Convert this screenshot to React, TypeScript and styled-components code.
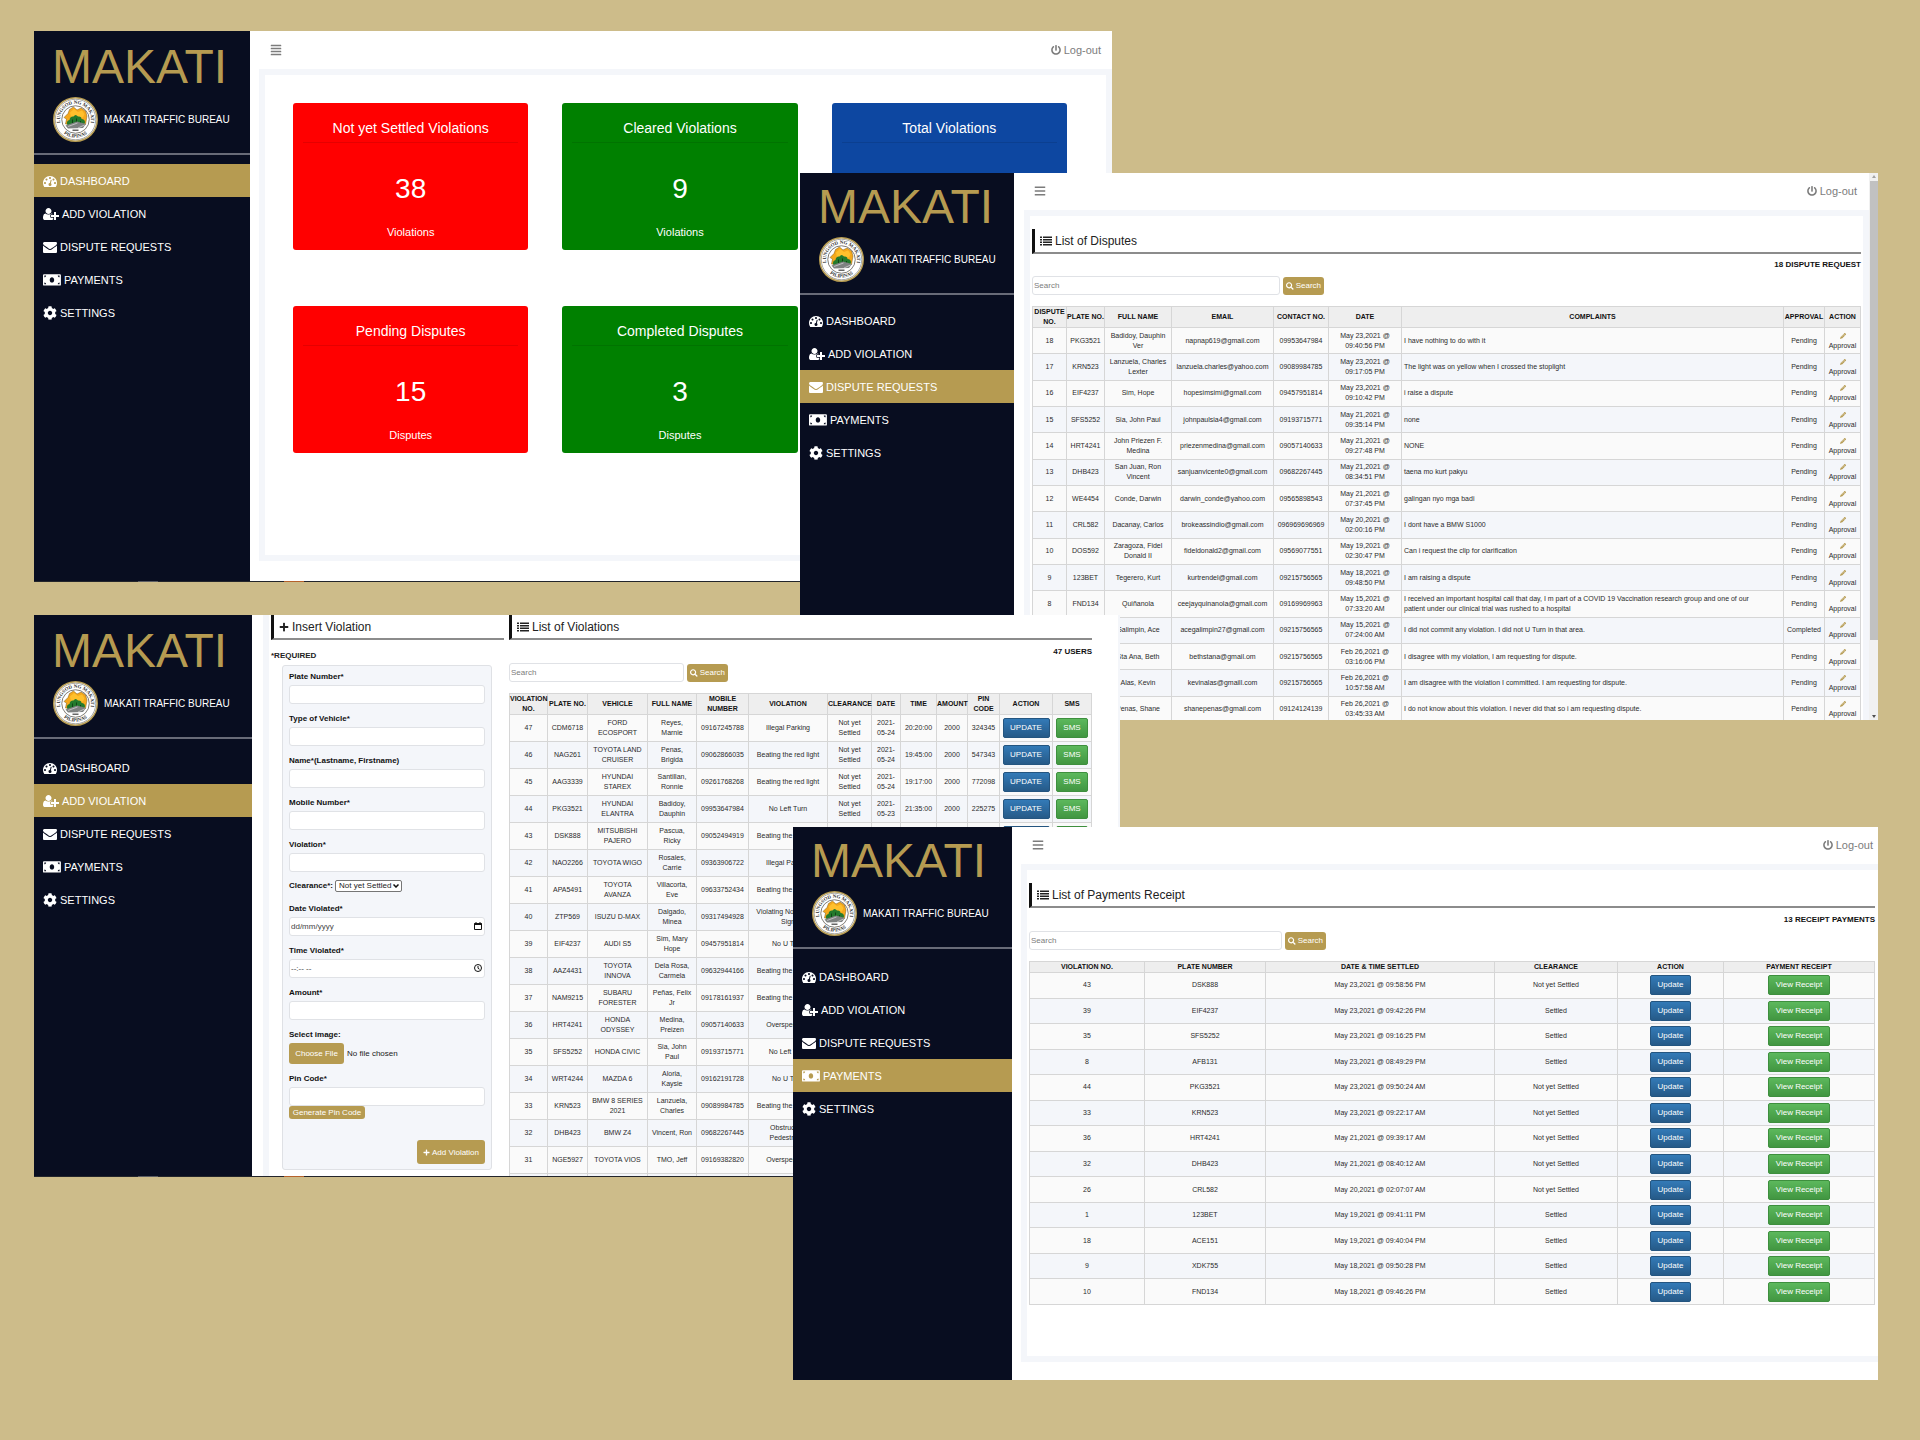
import React, { useId } from "react";
import styled, { createGlobalStyle, css } from "styled-components";
import {
  FaAlignJustify,
  FaBars,
  FaCog,
  FaPencilAlt,
  FaPlus,
  FaPowerOff,
  FaSearch,
} from "react-icons/fa";

const color = {
  desk: "#cdbc8a",
  navy: "#080d20",
  gold: "#b69b51",
  frame: "#f4f6fa",
  line: "#d6d6d6",
  muted: "#7c7c7c",
};

const GlobalStyle = createGlobalStyle`
  *, *::before, *::after { box-sizing: border-box; }
  body { margin: 0; background: ${color.desk}; }
  body, button, input, select {
    font-family: "Liberation Sans", Arial, Helvetica, sans-serif;
  }
  a { color: inherit; text-decoration: none; }
`;

/* ---------- desktop and windows ---------- */

const Desk = styled.main`
  position: relative;
  min-height: 100vh;
  overflow: hidden;
  background: ${color.desk};
`;

const Window = styled.section<{ $x: number; $y: number; $w: number; $h: number }>`
  position: absolute;
  left: ${(p) => p.$x}px;
  top: ${(p) => p.$y}px;
  width: ${(p) => p.$w}px;
  height: ${(p) => p.$h}px;
  display: flex;
  flex-direction: column;
  overflow: hidden;
  background: #fff;
`;

const WindowBody = styled.div`
  flex: 1;
  min-height: 0;
  display: flex;
`;

const TaskbarEdge = styled.div`
  height: 1px;
  flex: none;
  background: linear-gradient(
    90deg,
    #23252b 104px,
    #5a5c62 104px 124px,
    #23252b 124px 250px,
    #b5622c 250px 270px,
    #23252b 270px
  );
`;

const Main = styled.div`
  flex: 1;
  min-width: 0;
  display: flex;
  flex-direction: column;
`;

const TopBar = styled.header<{ $h: number; $right: number }>`
  flex: none;
  height: ${(p) => p.$h}px;
  display: flex;
  align-items: center;
  justify-content: space-between;
  padding: 0 ${(p) => p.$right}px 1px 20px;
  color: ${color.muted};
`;

const MenuButton = styled.button`
  display: flex;
  padding: 0;
  border: 0;
  background: none;
  color: inherit;
  font-size: 12px;
`;

const LogOut = styled.a`
  display: flex;
  align-items: center;
  gap: 3px;
  font-size: 11px;
  line-height: 16px;
`;

const Frame = styled.div<{ $edges: string; $gap: number; $bottom?: number; $pad: string }>`
  flex: 1;
  min-height: 0;
  overflow: hidden;
  margin: 0 0 ${(p) => p.$bottom ?? 0}px ${(p) => p.$gap}px;
  border: solid ${color.frame};
  border-width: ${(p) => p.$edges};
  padding: ${(p) => p.$pad};
`;

/* ---------- sidebar ---------- */

const SidebarBox = styled.aside<{ $w: number; $top: number }>`
  flex: none;
  width: ${(p) => p.$w}px;
  padding-top: ${(p) => p.$top}px;
  background: ${color.navy};
  color: #fff;
`;

const Brand = styled.div`
  padding-left: 18px;
  font-size: 48px;
  line-height: 48px;
  color: ${color.gold};
`;

const Bureau = styled.div`
  display: flex;
  align-items: center;
  gap: 6px;
  margin: 6px 0 11px;
  padding-left: 19px;
  font-size: 10px;
  white-space: nowrap;
`;

const Rule = styled.hr`
  height: 2px;
  margin: 0;
  border: 0;
  background: #686b78;
`;

const Nav = styled.nav<{ $gap: number }>`
  display: flex;
  flex-direction: column;
  padding-top: ${(p) => p.$gap}px;
`;

const NavLink = styled.a<{ $active: boolean }>`
  display: flex;
  align-items: center;
  gap: 3px;
  height: 33px;
  padding-left: 9px;
  font-size: 11px;
  background: ${(p) => (p.$active ? color.gold : "transparent")};

  svg {
    flex: none;
    height: 14px;
    width: auto;
  }
`;

const TachometerIcon = () => (
  <svg viewBox="0 0 1792 1792" fill="currentColor" aria-hidden="true">
    <path d="M384 1152q0-53-37.5-90.5t-90.5-37.5-90.5 37.5-37.5 90.5 37.5 90.5 90.5 37.5 90.5-37.5 37.5-90.5zm192-448q0-53-37.5-90.5t-90.5-37.5-90.5 37.5-37.5 90.5 37.5 90.5 90.5 37.5 90.5-37.5 37.5-90.5zm428 481l101-382q6-26-7.5-48.5t-38.5-29.5-48 6.5-30 39.5l-101 382q-60 5-107 43.5t-63 98.5q-20 77 20 146t117 89 146-20 89-117q16-60-6-117t-72-91zm660-33q0-53-37.5-90.5t-90.5-37.5-90.5 37.5-37.5 90.5 37.5 90.5 90.5 37.5 90.5-37.5 37.5-90.5zm-640-640q0-53-37.5-90.5t-90.5-37.5-90.5 37.5-37.5 90.5 37.5 90.5 90.5 37.5 90.5-37.5 37.5-90.5zm448 192q0-53-37.5-90.5t-90.5-37.5-90.5 37.5-37.5 90.5 37.5 90.5 90.5 37.5 90.5-37.5 37.5-90.5zm320 448q0 261-141 483-19 29-54 29h-1402q-35 0-54-29-141-221-141-483 0-182 71-348t191-286 286-191 348-71 348 71 286 191 191 286 71 348z" />
  </svg>
);

const UserPlusIcon = () => (
  <svg viewBox="0 0 2048 1792" fill="currentColor" aria-hidden="true">
    <path d="M704 896q-159 0-271.5-112.5t-112.5-271.5 112.5-271.5 271.5-112.5 271.5 112.5 112.5 271.5-112.5 271.5-271.5 112.5zm960 128h352q13 0 22.5 9.5t9.5 22.5v192q0 13-9.5 22.5t-22.5 9.5h-352v352q0 13-9.5 22.5t-22.5 9.5h-192q-13 0-22.5-9.5t-9.5-22.5v-352h-352q-13 0-22.5-9.5t-9.5-22.5v-192q0-13 9.5-22.5t22.5-9.5h352v-352q0-13 9.5-22.5t22.5-9.5h192q13 0 22.5 9.5t9.5 22.5v352zm-736 224q0 52 38 90t90 38h256v238q-68 50-171 50h-874q-121 0-194-69t-73-190q0-53 3.5-103.5t14-109 26.5-108.5 43-97.5 62-81 85.5-53.5 111.5-20q19 0 39 17 79 61 154.5 91.5t164.5 30.5 164.5-30.5 154.5-91.5q20-17 39-17 132 0 217 96h-223q-52 0-90 38t-38 90v192z" />
  </svg>
);

const EnvelopeIcon = () => (
  <svg viewBox="0 0 1792 1792" fill="currentColor" aria-hidden="true">
    <path d="M1792 710v794q0 66-47 113t-113 47h-1472q-66 0-113-47t-47-113v-794q44 49 101 87 362 246 497 345 57 42 92.5 65.5t94.5 48 110 24.5h2q51 0 110-24.5t94.5-48 92.5-65.5q170-123 498-345 57-39 100-87zm0-294q0 79-49 151t-122 123q-376 261-468 325-10 7-42.5 31t-54 38.5-52 32.5-57.5 27-50 9h-2q-23 0-50-9t-57.5-27-52-32.5-54-38.5-42.5-31q-91-64-262-182.5t-205-142.5q-62-42-117-115.5t-55-136.5q0-78 41.5-130t118.5-52h1472q65 0 112.5 47t47.5 113z" />
  </svg>
);

const MoneyIcon = () => (
  <svg viewBox="0 0 640 500" fill="currentColor" aria-hidden="true">
    <path d="M608 44H32C14.330 44 0 58.330 0 76v340c0 17.670 14.330 32 32 32h576c17.670 0 32-14.330 32-32V76c0-17.670-14.330-32-32-32zM48 400v-64c35.350 0 64 28.650 64 64H48zm0-244v-64h64c0 35.350-28.650 64-64 64zm272 186c-44.190 0-80-42.980-80-96 0-53.020 35.820-96 80-96s80 42.980 80 96c0 53.030-35.830 96-80 96zm272 58h-64c0-35.350 28.650-64 64-64v64zm0-244c-35.350 0-64-28.650-64-64h64v64z" />
  </svg>
);

const ListIcon = () => (
  <svg width="12" height="10" viewBox="0 0 24 20" fill="currentColor" aria-hidden="true">
    {[1, 6, 11, 16].map((y) => (
      <g key={y}>
        <rect x="0" y={y} width="4" height="3" />
        <rect x="6" y={y} width="18" height="3" />
      </g>
    ))}
  </svg>
);

const Seal = () => {
  const id = useId();
  return (
    <svg width="45" height="45" viewBox="0 0 90 90" role="img" aria-label="Seal of Makati">
      <circle cx="45" cy="45" r="43.5" fill="#fff" stroke="#b69b51" strokeWidth="3" />
      <circle cx="45" cy="45" r="40.5" fill="none" stroke="#55524a" strokeWidth="1" />
      <circle cx="45" cy="45" r="27.5" fill="#fff" stroke="#55524a" strokeWidth="1.5" />
      <path id={`${id}t`} d="M18 60 A31 31 0 1 1 72 60" fill="none" />
      <path id={`${id}b`} d="M13 63 A37 37 0 0 0 77 63" fill="none" />
      <g fontFamily="'Liberation Serif', serif" fontWeight="bold" fontSize="10" fill="#333" textAnchor="middle">
        <text>
          <textPath href={`#${id}t`} startOffset="50%">
            LUNGSOD NG MAKATI
          </textPath>
        </text>
        <text>
          <textPath href={`#${id}b`} startOffset="50%">
            PILIPINAS
          </textPath>
        </text>
      </g>
      <path
        d="M22 41 L30 33 L33 25 L41 20 L48 26 L56 22 L65 28 L68 38 L65 55 L53 57 L25 54 L27 44 Z"
        fill="#f5a81c"
        stroke="#7b5a18"
        strokeWidth="1"
      />
      <path d="M34 31 L42 24 L50 30 L58 27 L63 34 L60 41 L36 41 Z" fill="#ffc02c" />
      <path
        d="M28 54 q-1 -7 5 -8 q1 -8 8 -7 q4 -6 9 0 q7 -1 7 5 q7 0 7 7 l-3 6 h-31 z"
        fill="#237a2c"
      />
      <path d="M39 45 v9 M47 43 v9 M55 48 v6" stroke="#0f4517" strokeWidth="2" />
      <path d="M25 57 L48 49 L66 54 L60 62 L30 63 Z" fill="#7e8181" />
      <path d="M30 59 L49 52 M50 62 L63 56" stroke="#fff" strokeWidth="1" />
      <rect x="39" y="65" width="12" height="3" fill="#666" />
    </svg>
  );
};

type Page = "DASHBOARD" | "ADD VIOLATION" | "DISPUTE REQUESTS" | "PAYMENTS" | "SETTINGS";

const pages: { name: Page; icon: React.ReactNode }[] = [
  { name: "DASHBOARD", icon: <TachometerIcon /> },
  { name: "ADD VIOLATION", icon: <UserPlusIcon /> },
  { name: "DISPUTE REQUESTS", icon: <EnvelopeIcon /> },
  { name: "PAYMENTS", icon: <MoneyIcon /> },
  { name: "SETTINGS", icon: <FaCog /> },
];

const Sidebar = (p: { active: Page; width: number; top: number; navGap: number }) => (
  <SidebarBox $w={p.width} $top={p.top}>
    <Brand>MAKATI</Brand>
    <Bureau>
      <Seal />
      MAKATI TRAFFIC BUREAU
    </Bureau>
    <Rule />
    <Nav $gap={p.navGap}>
      {pages.map(({ name, icon }) => (
        <NavLink key={name} href="#" $active={name === p.active}>
          {icon}
          {name}
        </NavLink>
      ))}
    </Nav>
  </SidebarBox>
);

const Header = (p: { height: number; right: number; icon?: React.ReactNode }) => (
  <TopBar $h={p.height} $right={p.right}>
    <MenuButton type="button" aria-label="Toggle menu">
      {p.icon ?? <FaBars />}
    </MenuButton>
    <LogOut href="#">
      <FaPowerOff size={10} />
      Log-out
    </LogOut>
  </TopBar>
);

/* ---------- dashboard ---------- */

const CardGrid = styled.div`
  display: grid;
  grid-template-columns: repeat(3, 1fr);
  gap: 56px 34px;
`;

const Card = styled.article<{ $bg: string }>`
  min-height: 147px;
  padding: 14px 10px 0;
  border-radius: 3px;
  background: ${(p) => p.$bg};
  color: #fff;
  text-align: center;
`;

const CardTitle = styled.h2`
  margin: 0;
  padding-bottom: 3px;
  border-bottom: 1px solid rgba(0, 0, 0, 0.1);
  font-size: 14px;
  font-weight: 400;
  line-height: 22px;
`;

const CardValue = styled.p`
  margin: 30px 0 19px;
  font-size: 28px;
  line-height: 32px;
`;

const CardUnit = styled.p`
  margin: 0;
  font-size: 11px;
  line-height: 16px;
`;

const cards = [
  { title: "Not yet Settled Violations", value: "38", unit: "Violations", bg: "#ff0000" },
  { title: "Cleared Violations", value: "9", unit: "Violations", bg: "#008000" },
  { title: "Total Violations", value: "", unit: "", bg: "#0d47a1" },
  { title: "Pending Disputes", value: "15", unit: "Disputes", bg: "#ff0000" },
  { title: "Completed Disputes", value: "3", unit: "Disputes", bg: "#008000" },
];

/* ---------- shared list parts ---------- */

const Heading = styled.h2`
  display: flex;
  align-items: center;
  gap: 3px;
  height: 25px;
  margin: 0;
  padding-left: 5px;
  border-left: 3px solid #111;
  border-bottom: 2px solid #8c8c8c;
  color: #222;
  font-size: 12px;
  font-weight: 400;
`;

const Count = styled.p<{ $h: number }>`
  margin: 0;
  font-size: 8px;
  font-weight: 700;
  line-height: ${(p) => p.$h}px;
  text-align: right;
  color: #111;
`;

const SearchRow = styled.form`
  display: flex;
  align-items: center;
  gap: 3px;
  margin-bottom: 11px;
`;

const textBox = css`
  height: 19px;
  padding: 0 1px;
  border: 1px solid #e0e2e6;
  border-radius: 3px;
  background: #fff;
  font-size: 8px;
  color: #222;
`;

const SearchBox = styled.input<{ $w: number }>`
  ${textBox}
  width: ${(p) => p.$w}px;

  &::placeholder {
    color: #7c7c7c;
  }
`;

const GoldButton = styled.button<{ $w?: number; $h: number }>`
  display: inline-flex;
  align-items: center;
  justify-content: center;
  gap: 2px;
  width: ${(p) => (p.$w ? `${p.$w}px` : "auto")};
  height: ${(p) => p.$h}px;
  padding: 0 3px;
  border: 0;
  border-radius: 3px;
  background: ${color.gold};
  color: #fff;
  font-size: 8px;
  white-space: nowrap;
`;

const SearchForm = ({ width }: { width: number }) => (
  <SearchRow>
    <SearchBox $w={width} type="text" placeholder="Search" aria-label="Search" />
    <GoldButton $w={41} $h={18} type="button">
      <FaSearch size={8} />
      Search
    </GoldButton>
  </SearchRow>
);

const Table = styled.table<{ $h?: number; $padX: number }>`
  width: 100%;
  height: ${(p) => (p.$h ? `${p.$h}px` : "auto")};
  table-layout: fixed;
  border-collapse: collapse;
  font-size: 7px;
  line-height: 10px;
  color: #2b2b2b;
  text-align: center;

  th,
  td {
    padding: 0;
    border: 1px solid ${color.line};
  }
  td {
    padding: 0 ${(p) => p.$padX}px;
  }
  th {
    background: #eee;
    color: #111;
  }
  tbody tr {
    background: #fafafa;
  }
  tbody tr:nth-child(even) {
    background: ${color.frame};
  }
`;

const HeadRow = styled.tr<{ $h: number }>`
  height: ${(p) => p.$h}px;
`;

const Row = styled.tr<{ $h?: number }>`
  height: ${(p) => (p.$h ? `${p.$h}px` : "auto")};
`;

const LeftCell = styled.td`
  && {
    padding: 0 30px 0 2px;
    text-align: left;
  }
`;

const ButtonCell = styled.td`
  && {
    padding: 0;
  }
`;

const Approval = styled.a`
  display: flex;
  flex-direction: column;
  align-items: center;
`;

const PencilLine = styled.span`
  display: flex;
  align-items: center;
  height: 10px;
  font-size: 6px;
  color: ${color.gold};
`;

const ActionButton = styled.button<{ $tone: "blue" | "green"; $w: number }>`
  width: ${(p) => p.$w}px;
  height: 20px;
  padding: 0;
  border: 1px solid ${(p) => (p.$tone === "blue" ? "#245580" : "#3e8f3e")};
  border-radius: 2px;
  background: ${(p) =>
    p.$tone === "blue"
      ? "linear-gradient(#337ab7, #265a88)"
      : "linear-gradient(#5cb85c, #419641)"};
  color: #fff;
  font-size: 8px;
  line-height: 10px;
  vertical-align: middle;
`;

const Columns = ({ widths }: { widths: (number | null)[] }) => (
  <colgroup>
    {widths.map((w, i) => (
      <col key={i} width={w ?? undefined} />
    ))}
  </colgroup>
);

const TableHead = ({ labels, height }: { labels: string[]; height: number }) => (
  <thead>
    <HeadRow $h={height}>
      {labels.map((l) => (
        <th key={l} scope="col">
          {l}
        </th>
      ))}
    </HeadRow>
  </thead>
);

/* ---------- disputes ---------- */

const disputes = [
  ["18", "PKG3521", "Badidoy, Dauphin Ver", "napnap619@gmail.com", "09953647984", "May 23,2021 @ 09:40:56 PM", "I have nothing to do with it", "Pending"],
  ["17", "KRN523", "Lanzuela, Charles Lexter", "lanzuela.charles@yahoo.com", "09089984785", "May 23,2021 @ 09:17:05 PM", "The light was on yellow when I crossed the stoplight", "Pending"],
  ["16", "EIF4237", "Sim, Hope", "hopesimsimi@gmail.com", "09457951814", "May 23,2021 @ 09:10:42 PM", "i raise a dispute", "Pending"],
  ["15", "SFS5252", "Sia, John Paul", "johnpaulsia4@gmail.com", "09193715771", "May 21,2021 @ 09:35:14 PM", "none", "Pending"],
  ["14", "HRT4241", "John Priezen F. Medina", "priezenmedina@gmail.com", "09057140633", "May 21,2021 @ 09:27:48 PM", "NONE", "Pending"],
  ["13", "DHB423", "San Juan, Ron Vincent", "sanjuanvicente0@gmail.com", "09682267445", "May 21,2021 @ 08:34:51 PM", "taena mo kurt pakyu", "Pending"],
  ["12", "WE4454", "Conde, Darwin", "darwin_conde@yahoo.com", "09565898543", "May 21,2021 @ 07:37:45 PM", "galingan nyo mga badi", "Pending"],
  ["11", "CRL582", "Dacanay, Carlos", "brokeassindio@gmail.com", "096969696969", "May 20,2021 @ 02:00:16 PM", "I dont have a BMW S1000", "Pending"],
  ["10", "DOS592", "Zaragoza, Fidel Donald II", "fideldonald2@gmail.com", "09569077551", "May 19,2021 @ 02:30:47 PM", "Can i request the clip for clarification", "Pending"],
  ["9", "123BET", "Tegerero, Kurt", "kurtrendel@gmail.com", "09215756565", "May 18,2021 @ 09:48:50 PM", "I am raising a dispute", "Pending"],
  ["8", "FND134", "Quiñanola", "ceejayquinanola@gmail.com", "09169969963", "May 15,2021 @ 07:33:20 AM", "I received an important hospital call that day, I m part of a COVID 19 Vaccination research group and one of our patient under our clinical trial was rushed to a hospital", "Pending"],
  ["", "", "Galimpin, Ace", "acegalimpin27@gmail.com", "09215756565", "May 15,2021 @ 07:24:00 AM", "I did not commit any violation. I did not U Turn in that area.", "Completed"],
  ["", "", "Sta Ana, Beth", "bethstana@gmail.om", "09215756565", "Feb 26,2021 @ 03:16:06 PM", "I disagree with my violation, I am requesting for dispute.", "Pending"],
  ["", "", "Alas, Kevin", "kevinalas@gmaill.com", "09215756565", "Feb 26,2021 @ 10:57:58 AM", "I am disagree with the violation I committed. I am requesting for dispute.", "Pending"],
  ["", "", "Penas, Shane", "shanepenas@gmail.com", "09124124139", "Feb 26,2021 @ 03:45:33 AM", "I do not know about this violation. I never did that so i am requesting dispute.", "Pending"],
];

const DateCell = styled.td`
  && {
    padding: 0 8px;
  }
`;

const ScrollBar = styled.div`
  flex: none;
  width: 9px;
  display: flex;
  flex-direction: column;
  align-items: center;
  background: #f1f1f1;
`;

const ScrollArrow = styled.span<{ $down?: boolean }>`
  width: 0;
  height: 0;
  margin: ${(p) => (p.$down ? "auto 0 2px" : "2px 0 3px")};
  border: solid transparent;
  border-width: ${(p) => (p.$down ? "3px 2px 0" : "0 2px 3px")};
  border-top-color: ${(p) => (p.$down ? "#505050" : "transparent")};
  border-bottom-color: ${(p) => (p.$down ? "transparent" : "#a3a3a3")};
`;

const ScrollThumb = styled.span`
  width: 8px;
  height: 84%;
  background: #c1c1c1;
`;

/* ---------- violations ---------- */

const TwoColumns = styled.div`
  display: grid;
  grid-template-columns: 233px minmax(0, 1fr);
  gap: 5px;
`;

const Required = styled.p`
  margin: 0;
  padding: 11px 0 4px;
  font-size: 8px;
  font-weight: 700;
  line-height: 10px;
  color: #222;
`;

const FormPanel = styled.form`
  display: flex;
  flex-direction: column;
  align-items: flex-start;
  width: 210px;
  margin-left: 11px;
  padding: 3px 6px 5px;
  border: 1px solid #dfe1e5;
  border-radius: 3px;
  background: ${color.frame};
  font-size: 8px;
`;

const Field = styled.div`
  position: relative;
  width: 100%;
  margin-bottom: 7px;
`;

const FieldLabel = styled.label`
  display: block;
  font-weight: 700;
  line-height: 16px;
  color: #111;
`;

const FieldInput = styled.input`
  ${textBox}
  display: block;
  width: 100%;

  &::placeholder {
    color: #444;
  }
`;

const FieldIcon = styled.svg`
  position: absolute;
  right: 3px;
  bottom: 6px;
`;

const ClearanceRow = styled.div`
  display: flex;
  align-items: center;
  gap: 2px;
  height: 14px;
  margin-bottom: 8px;
`;

const SelectWrap = styled.span`
  position: relative;
  display: flex;
`;

const ClearanceSelect = styled.select`
  appearance: none;
  width: 67px;
  height: 12px;
  padding: 0 0 0 3px;
  border: 1px solid #767676;
  border-radius: 2px;
  background: #fff;
  font-size: 8px;
  line-height: 10px;
  color: #222;
`;

const SelectArrow = styled.svg`
  position: absolute;
  right: 3px;
  top: 4px;
  pointer-events: none;
`;

const FileInput = styled.input`
  display: block;
  width: 100%;
  height: 21px;
  font-size: 8px;
  color: #222;

  &::file-selector-button {
    width: 55px;
    height: 21px;
    margin: 0 3px 0 0;
    padding: 0;
    border: 0;
    border-radius: 3px;
    background: ${color.gold};
    color: #fff;
    font-size: 8px;
  }
`;

const PinField = styled(Field)`
  margin-bottom: 0;
`;

const SubmitRow = styled.div`
  align-self: flex-end;
  display: flex;
  padding-top: 21px;
`;

const GenerateRow = styled.div`
  display: flex;
`;

const TextField = ({ label, id }: { label: string; id: string }) => (
  <Field>
    <FieldLabel htmlFor={id}>{label}</FieldLabel>
    <FieldInput id={id} type="text" />
  </Field>
);

const violations = [
  ["47", "CDM6718", "FORD ECOSPORT", "Reyes, Marnie", "09167245788", "Illegal Parking", "Not yet Settled", "2021-05-24", "20:20:00", "2000", "324345"],
  ["46", "NAG261", "TOYOTA LAND CRUISER", "Penas, Brigida", "09062866035", "Beating the red light", "Not yet Settled", "2021-05-24", "19:45:00", "2000", "547343"],
  ["45", "AAG3339", "HYUNDAI STAREX", "Santillan, Ronnie", "09261768268", "Beating the red light", "Not yet Settled", "2021-05-24", "19:17:00", "2000", "772098"],
  ["44", "PKG3521", "HYUNDAI ELANTRA", "Badidoy, Dauphin", "09953647984", "No Left Turn", "Not yet Settled", "2021-05-23", "21:35:00", "2000", "225275"],
  ["43", "DSK888", "MITSUBISHI PAJERO", "Pascua, Ricky", "09052494919", "Beating the red light", "Not yet Settled", "2021-05-23", "", "", ""],
  ["42", "NAO2266", "TOYOTA WIGO", "Rosales, Carrie", "09363906722", "Illegal Parking", "", "", "", "", ""],
  ["41", "APA5491", "TOYOTA AVANZA", "Villacorta, Eve", "09633752434", "Beating the red light", "", "", "", "", ""],
  ["40", "ZTP569", "ISUZU D-MAX", "Dalgado, Minea", "09317494928", "Violating No Parking Sign", "", "", "", "", ""],
  ["39", "EIF4237", "AUDI S5", "Sim, Mary Hope", "09457951814", "No U Turn", "", "", "", "", ""],
  ["38", "AAZ4431", "TOYOTA INNOVA", "Dela Rosa, Carmela", "09632944166", "Beating the red light", "", "", "", "", ""],
  ["37", "NAM9215", "SUBARU FORESTER", "Peñas, Felix Jr", "09178161937", "Beating the red light", "", "", "", "", ""],
  ["36", "HRT4241", "HONDA ODYSSEY", "Medina, Preizen", "09057140633", "Overspeeding", "", "", "", "", ""],
  ["35", "SFS5252", "HONDA CIVIC", "Sia, John Paul", "09193715771", "No Left Turn", "", "", "", "", ""],
  ["34", "WRT4244", "MAZDA 6", "Aloria, Kaysie", "09162191728", "No U Turn", "", "", "", "", ""],
  ["33", "KRN523", "BMW 8 SERIES 2021", "Lanzuela, Charles", "09089984785", "Beating the red light", "", "", "", "", ""],
  ["32", "DHB423", "BMW Z4", "Vincent, Ron", "09682267445", "Obstructing Pedestrians", "", "", "", "", ""],
  ["31", "NGE5927", "TOYOTA VIOS", "TMO, Jeff", "09169382820", "Overspeeding", "", "", "", "", ""],
  ["", "", "", "", "", "", "", "", "", "", ""],
];

/* ---------- payments ---------- */

const payments = [
  ["43", "DSK888", "May 23,2021 @ 09:58:56 PM", "Not yet Settled"],
  ["39", "EIF4237", "May 23,2021 @ 09:42:26 PM", "Settled"],
  ["35", "SFS5252", "May 23,2021 @ 09:16:25 PM", "Settled"],
  ["8", "AFB131", "May 23,2021 @ 08:49:29 PM", "Settled"],
  ["44", "PKG3521", "May 23,2021 @ 09:50:24 AM", "Not yet Settled"],
  ["33", "KRN523", "May 23,2021 @ 09:22:17 AM", "Not yet Settled"],
  ["36", "HRT4241", "May 21,2021 @ 09:39:17 AM", "Not yet Settled"],
  ["32", "DHB423", "May 21,2021 @ 08:40:12 AM", "Not yet Settled"],
  ["26", "CRL582", "May 20,2021 @ 02:07:07 AM", "Not yet Settled"],
  ["1", "123BET", "May 19,2021 @ 09:41:11 PM", "Settled"],
  ["18", "ACE151", "May 19,2021 @ 09:40:04 PM", "Settled"],
  ["9", "XDK755", "May 18,2021 @ 09:50:28 PM", "Settled"],
  ["10", "FND134", "May 18,2021 @ 09:46:26 PM", "Settled"],
];

const DashboardWindow = () => (
  <Window $x={34} $y={31} $w={1078} $h={551}>
    <WindowBody>
      <Sidebar active="DASHBOARD" width={216} top={12} navGap={9} />
      <Main>
        <Header height={38} right={11} icon={<FaAlignJustify />} />
        <Frame $edges="6px" $gap={9} $bottom={20} $pad="28px 39px 0 28px">
          <CardGrid>
            {cards.map((c) => (
              <Card key={c.title} $bg={c.bg}>
                <CardTitle>{c.title}</CardTitle>
                <CardValue>{c.value}</CardValue>
                <CardUnit>{c.unit}</CardUnit>
              </Card>
            ))}
          </CardGrid>
        </Frame>
      </Main>
    </WindowBody>
    <TaskbarEdge />
  </Window>
);

const DisputesWindow = () => (
  <Window $x={800} $y={173} $w={1078} $h={547}>
    <WindowBody>
      <Sidebar active="DISPUTE REQUESTS" width={214} top={10} navGap={9} />
      <Main>
        <Header height={37} right={12} />
        <Frame $edges="6px 6px 0" $gap={10} $pad="13px 2px 0">
          <Heading>
            <ListIcon />
            List of Disputes
          </Heading>
          <Count $h={22}>18 DISPUTE REQUEST</Count>
          <SearchForm width={248} />
          <Table $h={417} $padX={1}>
            <Columns widths={[34, 38, 67, 102, 55, 73, null, 41, 36]} />
            <TableHead
              height={19}
              labels={["DISPUTE NO.", "PLATE NO.", "FULL NAME", "EMAIL", "CONTACT NO.", "DATE", "COMPLAINTS", "APPROVAL", "ACTION"]}
            />
            <tbody>
              {disputes.map((d) => (
                <Row key={d[5]}>
                  {d.slice(0, 5).map((v, i) => (
                    <td key={i}>{v}</td>
                  ))}
                  <DateCell>{d[5]}</DateCell>
                  <LeftCell>{d[6]}</LeftCell>
                  <td>{d[7]}</td>
                  <td>
                    <Approval href="#">
                      <PencilLine>
                        <FaPencilAlt />
                      </PencilLine>
                      Approval
                    </Approval>
                  </td>
                </Row>
              ))}
            </tbody>
          </Table>
        </Frame>
      </Main>
      <ScrollBar>
        <ScrollArrow />
        <ScrollThumb />
        <ScrollArrow $down />
      </ScrollBar>
    </WindowBody>
  </Window>
);

const ViolationsWindow = () => (
  <Window $x={34} $y={615} $w={1086} $h={562}>
    <WindowBody>
      <Sidebar active="ADD VIOLATION" width={218} top={12} navGap={12} />
      <Main>
        <Frame $edges="0 2px 0 6px" $gap={11} $pad="0 26px 0 2px">
          <TwoColumns>
            <div>
              <Heading>
                <FaPlus size={10} />
                Insert Violation
              </Heading>
              <Required>*REQUIRED</Required>
              <FormPanel>
                <TextField id="plate" label="Plate Number*" />
                <TextField id="vehicle" label="Type of Vehicle*" />
                <TextField id="name" label="Name*(Lastname, Firstname)" />
                <TextField id="mobile" label="Mobile Number*" />
                <TextField id="violation" label="Violation*" />
                <ClearanceRow>
                  <FieldLabel htmlFor="clearance">Clearance*:</FieldLabel>
                  <SelectWrap>
                    <ClearanceSelect id="clearance">
                      <option>Not yet Settled</option>
                    </ClearanceSelect>
                    <SelectArrow width="6" height="4" viewBox="0 0 12 8" aria-hidden="true">
                      <path d="M1 1l5 5 5-5" fill="none" stroke="#111" strokeWidth="3" />
                    </SelectArrow>
                  </SelectWrap>
                </ClearanceRow>
                <Field>
                  <FieldLabel htmlFor="date">Date Violated*</FieldLabel>
                  <FieldInput id="date" type="text" placeholder="dd/mm/yyyy" />
                  <FieldIcon width="8" height="8" viewBox="0 0 16 16" aria-hidden="true">
                    <path d="M1 3h14v12H1z" fill="none" stroke="#111" strokeWidth="2" />
                    <path d="M1 2h14v4H1zM3 0h2v3H3zM11 0h2v3h-2z" fill="#111" />
                  </FieldIcon>
                </Field>
                <Field>
                  <FieldLabel htmlFor="time">Time Violated*</FieldLabel>
                  <FieldInput id="time" type="text" placeholder="--:-- --" />
                  <FieldIcon width="8" height="8" viewBox="0 0 16 16" aria-hidden="true">
                    <circle cx="8" cy="8" r="7" fill="none" stroke="#111" strokeWidth="2" />
                    <path d="M8 4v4.500l3 2" fill="none" stroke="#111" strokeWidth="2" />
                  </FieldIcon>
                </Field>
                <TextField id="amount" label="Amount*" />
                <Field>
                  <FieldLabel htmlFor="image">Select image:</FieldLabel>
                  <FileInput id="image" type="file" />
                </Field>
                <PinField>
                  <FieldLabel htmlFor="pin">Pin Code*</FieldLabel>
                  <FieldInput id="pin" type="text" />
                </PinField>
                <GenerateRow>
                  <GoldButton $w={76} $h={13} type="button">
                    Generate Pin Code
                  </GoldButton>
                </GenerateRow>
                <SubmitRow>
                  <GoldButton $w={68} $h={24} type="button">
                    <FaPlus size={7} />
                    Add Violation
                  </GoldButton>
                </SubmitRow>
              </FormPanel>
            </div>
            <div>
              <Heading>
                <ListIcon />
                List of Violations
              </Heading>
              <Count $h={23}>47 USERS</Count>
              <SearchForm width={175} />
              <Table $padX={3}>
                <Columns widths={[38, 40, 60, 49, 52, null, 44, 29, 36, 31, 32, 53, 39]} />
                <TableHead
                  height={19}
                  labels={["VIOLATION NO.", "PLATE NO.", "VEHICLE", "FULL NAME", "MOBILE NUMBER", "VIOLATION", "CLEARANCE", "DATE", "TIME", "AMOUNT", "PIN CODE", "ACTION", "SMS"]}
                />
                <tbody>
                  {violations.map((v) => (
                    <Row key={v[0]} $h={27}>
                      {v.map((c, i) => (
                        <td key={i}>{c}</td>
                      ))}
                      <ButtonCell>
                        <ActionButton $tone="blue" $w={47} type="button">
                          UPDATE
                        </ActionButton>
                      </ButtonCell>
                      <ButtonCell>
                        <ActionButton $tone="green" $w={32} type="button">
                          SMS
                        </ActionButton>
                      </ButtonCell>
                    </Row>
                  ))}
                </tbody>
              </Table>
            </div>
          </TwoColumns>
        </Frame>
      </Main>
    </WindowBody>
    <TaskbarEdge />
  </Window>
);

const PaymentsWindow = () => (
  <Window $x={793} $y={827} $w={1085} $h={553}>
    <WindowBody>
      <Sidebar active="PAYMENTS" width={219} top={10} navGap={11} />
      <Main>
        <Header height={37} right={5} />
        <Frame $edges="6px 0 6px 6px" $gap={9} $bottom={18} $pad="13px 3px 0 2px">
          <Heading>
            <ListIcon />
            List of Payments Receipt
          </Heading>
          <Count $h={23}>13 RECEIPT PAYMENTS</Count>
          <SearchForm width={253} />
          <Table $h={344} $padX={1}>
            <Columns widths={[115, 121, null, 123, 106, 151]} />
            <TableHead
              height={11}
              labels={["VIOLATION NO.", "PLATE NUMBER", "DATE & TIME SETTLED", "CLEARANCE", "ACTION", "PAYMENT RECEIPT"]}
            />
            <tbody>
              {payments.map((p) => (
                <Row key={p[0]}>
                  {p.map((c, i) => (
                    <td key={i}>{c}</td>
                  ))}
                  <ButtonCell>
                    <ActionButton $tone="blue" $w={41} type="button">
                      Update
                    </ActionButton>
                  </ButtonCell>
                  <ButtonCell>
                    <ActionButton $tone="green" $w={62} type="button">
                      View Receipt
                    </ActionButton>
                  </ButtonCell>
                </Row>
              ))}
            </tbody>
          </Table>
        </Frame>
      </Main>
    </WindowBody>
  </Window>
);

export default function App() {
  return (
    <>
      <GlobalStyle />
      <Desk>
        <DashboardWindow />
        <DisputesWindow />
        <ViolationsWindow />
        <PaymentsWindow />
      </Desk>
    </>
  );
}
